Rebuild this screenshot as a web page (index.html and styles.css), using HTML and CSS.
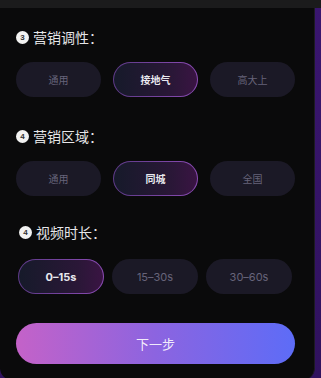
FILE: index.html
```html
<!DOCTYPE html>
<html lang="zh">
  <head>
    <meta charset="UTF-8" />
    <title>营销设置</title>
    <link rel="stylesheet" href="styles.css">
  </head>
  <body>
    <div class="top-bar"></div>
    <div class="panel">
      <div class="section">
        <div class="section-title"><span class="num">3</span>营销调性：</div>
        <div class="options">
          <div class="opt">通用</div>
          <div class="opt active">接地气</div>
          <div class="opt">高大上</div>
        </div>
      </div>

      <div class="section">
        <div class="section-title"><span class="num">4</span>营销区域：</div>
        <div class="options">
          <div class="opt">通用</div>
          <div class="opt active">同城</div>
          <div class="opt">全国</div>
        </div>
      </div>

      <div class="section section-duration">
        <div class="section-title"><span class="num">4</span>视频时长：</div>
        <div class="options">
          <div class="opt active latin">0–15s</div>
          <div class="opt latin">15–30s</div>
          <div class="opt latin">30–60s</div>
        </div>
      </div>

      <button class="next-btn">下一步</button>
    </div>
  </body>
</html>
```

FILE: styles.css
```css
body {
  margin: 0;
  width: 321px;
  height: 378px;
  overflow: hidden;
  background: linear-gradient(180deg, #3a1670, #30125e);
  font-family: "Noto Sans CJK SC", "Noto Sans", sans-serif;
}

.top-bar {
  height: 8px;
  background-color: #1b1b1c;
}

.panel {
  width: 315px;
  height: 372px;
  box-sizing: border-box;
  background-color: #0a0a0b;
  border-right: 1px solid #1d1a23;
  border-radius: 0 0 12px 12px;
  padding: 21px 0 0 16px;
}

.section {
  margin-bottom: 31px;
}

.section-title {
  display: flex;
  align-items: center;
  height: 16px;
  font-size: 14px;
  color: #e6e6e8;
  margin-bottom: 17px;
}

.num {
  width: 13px;
  height: 13px;
  border-radius: 50%;
  background-color: #f2f2f2;
  color: #333;
  font-family: "Liberation Sans", sans-serif;
  font-size: 8px;
  font-weight: bold;
  display: flex;
  align-items: center;
  justify-content: center;
  margin-right: 4px;
}

.options {
  display: flex;
  gap: 12px;
}

.opt {
  width: 85px;
  height: 35px;
  box-sizing: border-box;
  border-radius: 18px;
  background-color: #1b1926;
  color: #67647a;
  font-size: 10px;
  display: flex;
  align-items: center;
  justify-content: center;
}

.opt.active {
  border: 1px solid transparent;
  background: linear-gradient(90deg, #161a2a, #2a1737 70%, #3a1443) padding-box,
    linear-gradient(90deg, #5e3a88, #8a4bb3) border-box;
  color: #e8e8ee;
  font-weight: bold;
}

.latin {
  font-family: "Inter", "Roboto", sans-serif;
  font-size: 11px;
}

.section-duration .section-title {
  margin-left: 3px;
  margin-top: -3px;
  margin-bottom: 19px;
}

.section-duration .options {
  gap: 8px;
  margin-left: 2px;
}

.section-duration .opt {
  width: 86px;
}

.section-duration {
  margin-bottom: 29px;
}

.next-btn {
  width: 279px;
  height: 41px;
  border: none;
  border-radius: 21px;
  background: linear-gradient(90deg, #c462c8, #8c64e0 50%, #5d6cf7);
  color: rgba(255, 255, 255, 0.9);
  font-family: "Noto Sans CJK SC", sans-serif;
  font-size: 13px;
  cursor: pointer;
}
```
